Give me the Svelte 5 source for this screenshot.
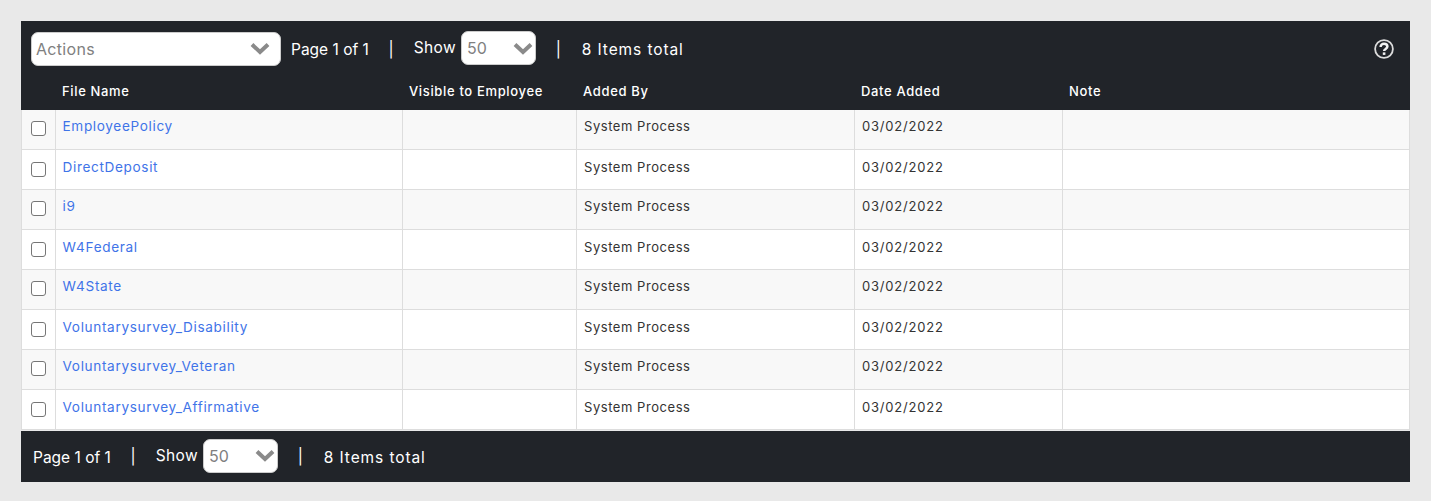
<script>
  const files = [
    'EmployeePolicy',
    'DirectDeposit',
    'i9',
    'W4Federal',
    'W4State',
    'Voluntarysurvey_Disability',
    'Voluntarysurvey_Veteran',
    'Voluntarysurvey_Affirmative'
  ];
</script>

{#snippet chevron()}
  <svg width="20" height="13" viewBox="0 0 20 13" fill="none" stroke="#8a8a8a" stroke-width="4"><path d="M2 2.5l8 7.5 8-7.5" /></svg>
{/snippet}

{#snippet pager()}
  <span class="page">Page 1 of 1</span>
  <span class="sep">|</span>
  <span class="show">Show</span>
  <div class="select small">
    <span>50</span>
    {@render chevron()}
  </div>
  <span class="sep second">|</span>
  <span class="total">8 Items total</span>
{/snippet}

<div class="grid-wrap">
  <div class="toolbar">
    <div class="select actions">
      <span>Actions</span>
      {@render chevron()}
    </div>
    {@render pager()}
    <svg class="help" width="20" height="20" viewBox="0 0 20 20" fill="none">
      <circle cx="10" cy="10" r="8.9" stroke="#dcdcdc" stroke-width="1.8" />
      <path d="M6.6 8c0-2.1 1.5-3.3 3.4-3.3s3.4 1.1 3.4 2.9c0 2.4-3.3 2.3-3.3 4.5" stroke="#f2f2f2" stroke-width="2.5" />
      <rect x="8.8" y="13.4" width="2.6" height="2.5" fill="#f2f2f2" />
    </svg>
  </div>

  <table>
    <colgroup>
      <col class="c-check" />
      <col class="c-name" />
      <col class="c-visible" />
      <col class="c-added" />
      <col class="c-date" />
      <col />
    </colgroup>
    <thead>
      <tr>
        <th></th>
        <th>File Name</th>
        <th>Visible to Employee</th>
        <th>Added By</th>
        <th>Date Added</th>
        <th>Note</th>
      </tr>
    </thead>
    <tbody>
      {#each files as file}
        <tr>
          <td class="check"><span class="box"></span></td>
          <td class="name"><a href="#top">{file}</a></td>
          <td></td>
          <td>System Process</td>
          <td class="date">03/02/2022</td>
          <td></td>
        </tr>
      {/each}
    </tbody>
  </table>

  <div class="footer">
    {@render pager()}
  </div>
</div>

<style>
  :global(body) {
    margin: 0;
    background: #e9e9e9;
  }

  .grid-wrap {
    margin: 21px 21px 19px;
    font-family: Inter, "Liberation Sans", sans-serif;
    color: #fff;
  }

  .toolbar,
  .footer {
    display: flex;
    align-items: center;
    background: #212429;
    font-size: 15.5px;
  }

  .toolbar {
    height: 56px;
    padding: 0 16px 0 10px;
  }

  .footer {
    height: 51px;
    margin-top: 1px;
    padding-left: 12px;
  }

  .footer .page,
  .footer .total {
    margin-top: 2px;
  }

  .select {
    display: flex;
    align-items: center;
    justify-content: space-between;
    box-sizing: border-box;
    height: 34px;
    background: #fff;
    border: 1px solid #ccc;
    border-radius: 7px;
    color: #808080;
    font-size: 16px;
    padding: 0 2px 0 5px;
  }

  .actions {
    width: 250px;
    letter-spacing: 0.3px;
    margin-top: -1px;
    padding: 0 10px 0 4px;
  }

  .small {
    width: 75px;
    margin-top: -2px;
  }

  .page {
    margin-left: 10px;
  }

  .footer .page {
    margin-left: 0;
  }

  .sep {
    margin: 0 20px 0 19.6px;
  }

  .sep.second {
    margin: 0 21px 0 19.6px;
  }

  .show {
    margin-right: 5px;
    margin-top: -3px;
    letter-spacing: 0.4px;
  }

  .total {
    letter-spacing: 0.9px;
  }

  .help {
    margin-left: auto;
  }

  table {
    width: 100%;
    table-layout: fixed;
    border-collapse: collapse;
    font-size: 13px;
  }

  .c-check { width: 34px; }
  .c-name { width: 347px; }
  .c-visible { width: 174px; }
  .c-added { width: 278px; }
  .c-date { width: 208px; }

  th {
    background: #212429;
    border: 1px solid #212429;
    color: #fff;
    height: 28px;
    padding: 3px 6px 0;
    text-align: left;
    font-weight: 500;
    font-size: 13px;
    letter-spacing: 0.65px;
    vertical-align: top;
    line-height: 20px;
  }

  td {
    box-sizing: border-box;
    height: 40px;
    padding: 6px 7px 0;
    border: 1px solid #ddd;
    background: #fff;
    color: #333;
    vertical-align: top;
    line-height: 20px;
    letter-spacing: 0.55px;
  }

  tbody tr:nth-child(even) td {
    padding-top: 7px;
  }

  tbody tr:nth-child(odd) td {
    background: #f8f8f8;
  }

  td.name {
    font-size: 13.6px;
    padding-left: 6.5px;
    letter-spacing: 0.65px;
  }

  td.date {
    letter-spacing: 0.8px;
  }

  a {
    color: #3f74e8;
    text-decoration: none;
  }

  .box {
    display: block;
    box-sizing: border-box;
    width: 15px;
    height: 15px;
    margin: 5px 0 0 2px;
    background: #fff;
    border: 1px solid #767676;
    border-radius: 3px;
  }
</style>
